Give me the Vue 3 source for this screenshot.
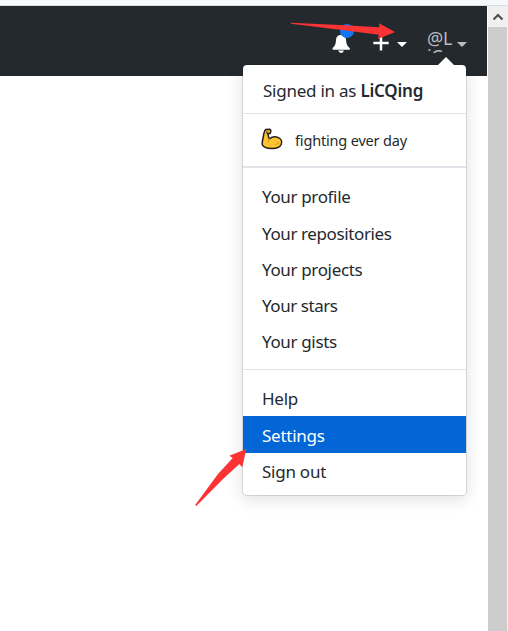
<script setup>
const profileLinks = [
  { label: 'Your profile', cls: 'profile' },
  { label: 'Your repositories', cls: 'repos' },
  { label: 'Your projects', cls: 'projects' },
  { label: 'Your stars', cls: 'stars' },
  { label: 'Your gists', cls: 'gists' },
]
const accountLinks = [
  { label: 'Help', cls: 'help' },
  { label: 'Settings', cls: 'settings', active: true },
  { label: 'Sign out', cls: 'signout' },
]
</script>

<template>
  <div class="window">
    <div class="toolbar-edge"></div>
    <div class="body">
      <main class="page">
        <header class="header">
          <div class="bell">
            <span class="unread"></span>
            <svg class="bell-icon" width="18" height="18" viewBox="0 0 18 18">
              <path d="M9 0C5.600 0 4.200 2.200 4 5.200C3.800 9 3 10.800 0.600 13V14.800H17.800V13C15 10.800 14.400 9 14.100 5.200C13.900 2.200 12.300 0 9 0ZM6.400 15.600H11.900C11.500 17 10.500 17.900 9.200 17.900C7.800 17.900 6.700 17 6.400 15.600Z" fill="#fff" />
            </svg>
          </div>
          <button class="create" aria-label="Create new">
            <svg width="16" height="16" viewBox="0 0 16 16"><path d="M8 0.500V15.500M0.300 8H15.700" stroke="#fff" stroke-width="2.500" /></svg>
            <svg class="caret" width="10" height="5" viewBox="0 0 10 5"><path d="M0 0H10L5 5Z" fill="#fff" /></svg>
          </button>
          <button class="account" aria-label="Account">
            <span class="avatar">@L<br>iC</span>
            <svg class="caret" width="10" height="5" viewBox="0 0 10 5"><path d="M0 0H10L5 5Z" fill="#b9bbbd" /></svg>
          </button>
        </header>

        <nav class="menu">
          <svg class="pointer" width="16" height="8" viewBox="0 0 16 8"><path d="M8 0L16 8H0Z" fill="#fff" /></svg>
          <div class="signed"><span>Signed in as <b>LiCQing</b></span></div>
          <div class="status">
            <svg width="22" height="22" viewBox="0 0 22 22">
              <path d="M4.600 1.500L8.500 1.200C9.800 1.400 10.200 2.700 9.600 4L9 5.400L6.900 5.800C6.900 7.500 7.400 9.100 8.400 10.800C10.600 9.100 14.200 8.300 17.300 9.600C20.100 10.800 21.300 13.600 20.300 16.300C18.800 19.600 14.600 20.700 10.500 20.500C6.500 20.500 2.800 19.200 1.300 16.900C0.800 14.500 1.600 11.800 2.300 8.600C2.700 6.100 3.200 3 4.600 1.500Z" fill="#fdc52f" stroke="#251e19" stroke-width="1.500" stroke-linejoin="round" />
              <path d="M8.300 10.700C8.300 12.500 7.700 13.500 6.600 14.200M14.200 16.500C16 16.500 17.300 15.500 17.700 14.200" fill="none" stroke="#e69727" stroke-width="1.100" stroke-linecap="round" />
              <path d="M5.900 3.100V5.600L8.600 5" fill="none" stroke="#251e19" stroke-width="1" />
            </svg>
            <span>fighting ever day</span>
          </div>
          <div class="links profile-links">
            <a v-for="item in profileLinks" :key="item.label" :class="item.cls">{{ item.label }}</a>
          </div>
          <div class="links account-links">
            <a v-for="item in accountLinks" :key="item.label" :class="[item.cls, { active: item.active }]">{{ item.label }}</a>
          </div>
        </nav>
      </main>
      <aside class="scrollbar">
        <div class="scroll-up"><svg width="12" height="8" viewBox="0 0 12 8"><path d="M1.500 6.500L6 2L10.500 6.500" fill="none" stroke="#505050" stroke-width="2.200" /></svg></div>
        <div class="thumb"></div>
      </aside>
    </div>
    <svg class="annotations" width="508" height="631" viewBox="0 0 508 631">
      <path d="M290.500 22.700L340 25L379.500 27.300L379 23.300L395 32L378 39L379 34.700L340 29.700L291 23.700Z" fill="#fb3334" />
      <path d="M195.200 505L218 474L232.700 458L229.300 455.700L246.300 449L242.300 467.300L239.300 464L223 479L196.300 506Z" fill="#fb3334" />
    </svg>
  </div>
</template>

<style>
body { margin: 0; overflow: hidden; background: #fff; }
</style>

<style scoped>
.window { position: relative; width: 508px; height: 631px; display: flex; flex-direction: column; overflow: hidden; background: #fff; color: #24292e; font-family: "Noto Sans", "Open Sans", sans-serif; }
.toolbar-edge { box-sizing: border-box; height: 6px; flex: none; background: #f7f8fa; border-bottom: 1px solid #dadddf; }
.body { flex: 1; display: flex; min-height: 0; }
.page { width: 487px; position: relative; }
.header { box-sizing: border-box; height: 70px; background: #24292e; display: flex; align-items: flex-start; justify-content: flex-end; padding: 21px 20px 0 0; }
button { appearance: none; border: 0; padding: 0; background: none; display: flex; font-family: inherit; }
.bell { position: relative; width: 19px; height: 25px; margin-right: 22px; padding-top: 8px; box-sizing: border-box; }
.bell-icon { display: block; }
.unread { position: absolute; left: 8px; top: -3px; width: 14px; height: 14px; border-radius: 50%; background: #1674ef; }
.create { gap: 8px; margin-right: 20px; padding-top: 8px; }
.create .caret { margin-top: 7px; }
.account { gap: 3px; padding-top: 0; }
.account .caret { margin-top: 15px; }
.avatar { box-sizing: border-box; display: block; width: 27px; height: 26px; padding-top: 2px; overflow: hidden; text-align: left; font-size: 18px; line-height: 18px; letter-spacing: -.3px; white-space: nowrap; color: #b9bbbd; }
.menu { position: absolute; left: 243px; top: 59px; width: 223px; height: 430px; background: #fff; border-radius: 4px; box-shadow: 0 0 0 1px rgba(27,31,35,.13), 0 4px 16px rgba(27,31,35,.15); font-size: 17px; }
.pointer { position: absolute; left: 195px; top: -8px; }
.signed { box-sizing: border-box; height: 49px; border-bottom: 1px solid #e1e4e8; padding: 14px 0 0 20px; line-height: 24px; white-space: nowrap; letter-spacing: -.24px; }
.signed b { font-weight: 600; }
.status { box-sizing: border-box; height: 54px; border-bottom: 2px solid #e1e4e8; display: flex; align-items: center; padding-left: 18px; gap: 12px; font-size: 14.500px; letter-spacing: -.17px; white-space: nowrap; }
.status svg { margin-top: -2px; }
.links a { box-sizing: border-box; display: flex; align-items: center; height: 36.200px; padding-left: 19px; white-space: nowrap; letter-spacing: -.35px; }
.links .profile { padding-bottom: 1px; }
.links .repos { letter-spacing: -.39px; }
.links .stars { letter-spacing: -.45px; }
.links .help, .links .settings, .links .signout { letter-spacing: -.25px; }
.links .help, .links .settings { padding-top: 1px; }
.profile-links { padding: 11px 0 9px; height: 181px; border-bottom: 1px solid #e1e4e8; }
.account-links { padding-top: 10px; }
.account-links a { height: 36px; }
.account-links a.active { height: 37px; background: #0366d6; color: #fff; }
.scrollbar { box-sizing: border-box; width: 21px; border-left: 1px solid #fff; border-right: 1px solid #f0f0f0; display: flex; flex-direction: column; }
.scroll-up { height: 21px; background: #f0f0f0; display: flex; align-items: center; justify-content: center; }
.thumb { flex: 1; background: #cdcdcd; }
.annotations { position: absolute; left: 0; top: 0; pointer-events: none; }
</style>
